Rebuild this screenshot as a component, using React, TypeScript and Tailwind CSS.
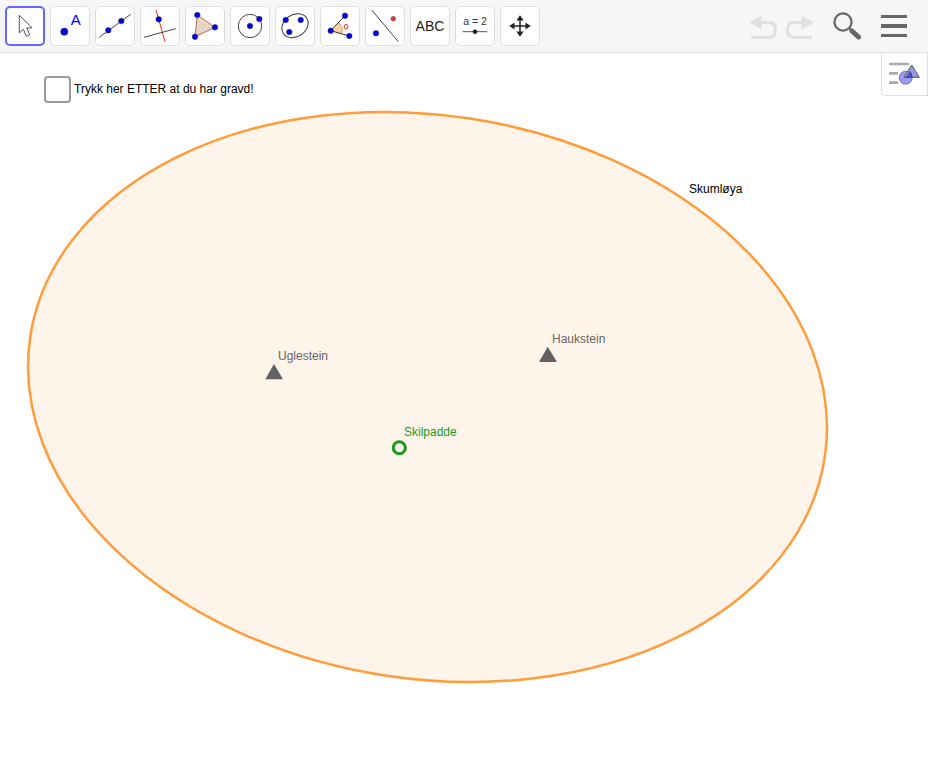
import React from 'react';

const BLUE = '#0000e8';

const Dot = ({ x, y, r = 2.8, fill = BLUE }: { x: number; y: number; r?: number; fill?: string }) => (
  <circle cx={x} cy={y} r={r} fill={fill} stroke="#333" strokeWidth={0.5} />
);

const tools: React.ReactNode[] = [
  // move
  <path key="a" d="M14.3 9.3 L14.3 26.8 L18.3 23.3 L21.3 30.3 L24.8 28.8 L21.8 22.1 L27 21.8 Z" fill="#fff" stroke="#555" strokeWidth={1} strokeLinejoin="round" />,
  // point
  <g key="b">
    <circle cx={14.3} cy={25.7} r={3.6} fill={BLUE} stroke="#222" strokeWidth={0.5} />
    <text x={25.7} y={19} textAnchor="middle" fontSize={15} fill={BLUE}>A</text>
  </g>,
  // line
  <g key="c">
    <line x1={4.3} y1={31.3} x2={35.7} y2={8.3} stroke="#444" strokeWidth={1} />
    <Dot x={13.3} y={24.3} />
    <Dot x={26.3} y={15} />
  </g>,
  // perpendicular
  <g key="d">
    <line x1={16} y1={4} x2={25} y2={35.7} stroke="#f03010" strokeWidth={1} />
    <line x1={4} y1={31.3} x2={35.7} y2={22.7} stroke="#444" strokeWidth={1} />
    <Dot x={18.7} y={13.3} />
  </g>,
  // polygon
  <g key="e">
    <defs>
      <pattern id="polyDots" width={2.5} height={2.5} patternUnits="userSpaceOnUse">
        <rect width={2.5} height={2.5} fill="#ecd8c8" />
        <circle cx={1.2} cy={1.2} r={0.45} fill="#d9a88c" />
      </pattern>
    </defs>
    <path d="M12.3 9 L30 21.3 L10 30.7 Z" fill="url(#polyDots)" stroke="#a8705a" strokeWidth={1} />
    <Dot x={12.3} y={9} />
    <Dot x={30} y={21.3} />
    <Dot x={10} y={30.7} />
  </g>,
  // circle
  <g key="f">
    <circle cx={20} cy={20} r={11.7} fill="none" stroke="#444" strokeWidth={1} />
    <Dot x={20} y={20} />
    <Dot x={29.3} y={13} />
  </g>,
  // ellipse
  <g key="g">
    <ellipse cx={20} cy={19.7} rx={14} ry={11} transform="rotate(-35 20 19.7)" fill="none" stroke="#333" strokeWidth={1} />
    <Dot x={10.7} y={14} />
    <Dot x={25.7} y={14} />
    <Dot x={14.3} y={26} />
  </g>,
  // angle
  <g key="h">
    <path d="M10.7 24.7 L18.6 16.4 A 11.5 11.5 0 0 1 21.7 27.8 Z" fill="#fbd0ac" />
    <path d="M18.6 16.4 A 11.5 11.5 0 0 1 21.7 27.8" fill="none" stroke="#f09040" strokeWidth={0.9} />
    <line x1={10.7} y1={24.7} x2={25} y2={9.7} stroke="#333" strokeWidth={1} />
    <line x1={10.7} y1={24.7} x2={29.3} y2={30} stroke="#333" strokeWidth={1} />
    <ellipse cx={26} cy={20.7} rx={1.9} ry={2.3} fill="none" stroke="#f03010" strokeWidth={1} />
    <Dot x={10.7} y={24.7} />
    <Dot x={25} y={9.7} />
    <Dot x={29.3} y={30} />
  </g>,
  // reflect
  <g key="i">
    <line x1={6.7} y1={4} x2={33.3} y2={35.7} stroke="#444" strokeWidth={1} />
    <Dot x={11} y={27.3} />
    <Dot x={28.3} y={12.7} r={2.3} fill="#f03030" />
  </g>,
  // text
  <text key="j" x={20} y={25.2} textAnchor="middle" fontSize={14} fill="#222">ABC</text>,
  // slider
  <g key="k">
    <text x={20} y={18.5} textAnchor="middle" fontSize={10.5} fill="#333">a = 2</text>
    <line x1={7.7} y1={25.7} x2={32.3} y2={25.7} stroke="#555" strokeWidth={1} />
    <circle cx={20} cy={25.7} r={2.3} fill="#222" />
  </g>,
  // move view
  <g key="l">
    <path d="M20 12 V28 M12 20 H28" stroke="#222" strokeWidth={1.5} />
    <path d="M20 9.3 L23.6 14.5 H16.4 Z M20 30.7 L23.6 25.5 H16.4 Z M9.3 20 L14.5 16.4 V23.6 Z M30.7 20 L25.5 16.4 V23.6 Z" fill="#222" />
  </g>,
];

export default function App() {
  return (
    <div className="flex flex-col w-[928px] h-[772px] bg-white overflow-hidden font-['Liberation_Sans',Arial,sans-serif]">
      {/* toolbar */}
      <div className="flex items-center justify-between h-[53px] shrink-0 pl-[5px] pr-[21px] bg-[#f6f6f6] border-b border-[#dfdfdf]">
        <div className="flex gap-[5px]">
          {tools.map((icon, i) => (
            <div
              key={i}
              className={
                i === 0
                  ? 'w-10 h-10 rounded-[5px] bg-white border-2 border-[#6666ff]'
                  : 'w-10 h-10 rounded-[5px] bg-white border border-[#dedede]'
              }
            >
              <svg
                viewBox={i === 0 ? '2 2 36 36' : '1 1 38 38'}
                className="block w-full h-full"
              >
                {icon}
              </svg>
            </div>
          ))}
        </div>
        <div className="flex items-center">
          <svg viewBox="0 0 28 28" className="w-7 h-7 text-[#e0e0e0]">
            <path d="M0 10.5 L12.5 3.7 V17.3 Z" fill="currentColor" />
            <path d="M10 10.5 H20 Q26.5 10.5 26.5 18 Q26.5 25.4 20 25.4 H2" fill="none" stroke="currentColor" strokeWidth={3} />
          </svg>
          <svg viewBox="0 0 28 28" className="w-7 h-7 ml-[9px] text-[#e0e0e0]">
            <path d="M28 10.5 L15.5 3.7 V17.3 Z" fill="currentColor" />
            <path d="M18 10.5 H8 Q1.5 10.5 1.5 18 Q1.5 25.4 8 25.4 H26" fill="none" stroke="currentColor" strokeWidth={3} />
          </svg>
          <svg viewBox="0 0 28 28" className="w-7 h-7 ml-[19px] text-[#666]">
            <circle cx={10} cy={10} r={8.6} fill="none" stroke="currentColor" strokeWidth={2.2} />
            <path d="M16.5 16.5 L19 19" stroke="currentColor" strokeWidth={2} />
            <path d="M19 19 L25.5 25" stroke="currentColor" strokeWidth={5} strokeLinecap="round" />
          </svg>
          <div className="flex flex-col gap-[6.4px] w-[26px] ml-5">
            <div className="h-[3.3px] bg-[#666]" />
            <div className="h-[3.3px] bg-[#666]" />
            <div className="h-[3.3px] bg-[#666]" />
          </div>
        </div>
      </div>

      {/* graphics view */}
      <div className="relative flex-1">
        <svg viewBox="0 53 928 719" className="absolute inset-0 w-full h-full">
          <ellipse
            cx={427.5}
            cy={397}
            rx={401.8}
            ry={281.7}
            transform="rotate(8.7 427.5 397)"
            fill="#fff4ea"
            stroke="#ff9c3c"
            strokeWidth={2.5}
          />
          <path d="M274 364 L283 379.3 H265.3 Z" fill="#616161" />
          <path d="M547.7 346.7 L557 362 H539 Z" fill="#616161" />
          <circle cx={399.3} cy={447.7} r={6} fill="#fff8f2" stroke="#1a9c1a" strokeWidth={3} />
          <text x={278} y={360} fontSize={12} fill="#666">Uglestein</text>
          <text x={552} y={343} fontSize={12} fill="#666">Haukstein</text>
          <text x={404} y={436} fontSize={12} fill="#1a9c1a">Skilpadde</text>
          <text x={689} y={193} fontSize={12} fill="#000">Skumløya</text>
        </svg>

        <div className="absolute left-[43.5px] top-[22.5px] flex items-center gap-[3.5px]">
          <div className="w-[27px] h-[27px] rounded-[4px] bg-white border-2 border-[#999]" />
          <span className="text-[12px] text-black">Trykk her ETTER at du har gravd!</span>
        </div>

        {/* style bar toggle */}
        <div className="absolute right-0 top-0 w-[47px] h-[43px] bg-white border-l border-r border-b border-[#dedede] rounded-bl-[5px]">
          <svg viewBox="1 0 45 42" className="block w-full h-full">
            <path d="M8 11 H28 M8 20.3 H17 M8 29.7 H17" stroke="#aaa" strokeWidth={2.7} />
            <circle cx={24.7} cy={24.7} r={6.5} fill="#9999f5" stroke="#666" strokeWidth={0.8} />
            <path d="M30.7 12 L38.3 24.3 H23 Z" fill="#9999f5" stroke="#555" strokeWidth={1} />
            <path d="M25.5 24.3 L29 18.5 A 6.5 6.5 0 0 1 31 24.3 Z" fill="#5050e0" stroke="#333" strokeWidth={0.6} />
          </svg>
        </div>
      </div>
    </div>
  );
}
